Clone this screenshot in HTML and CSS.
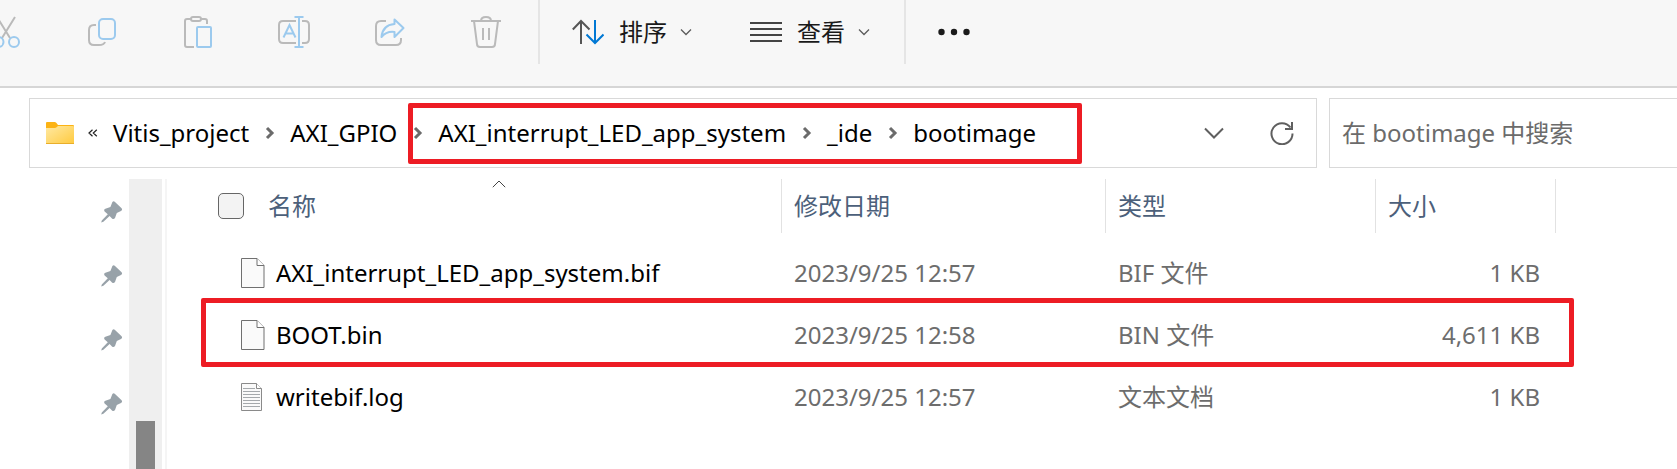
FILE: index.html
```html
<!DOCTYPE html>
<html lang="zh-CN">
<head>
<meta charset="utf-8">
<title>bootimage</title>
<link rel="stylesheet" href="styles.css">
</head>
<body>
<svg class="symbols" aria-hidden="true">
  <symbol id="pin" viewBox="0 0 22 22"><path d="M11.400 1Q12.600-.4 14 1L20.600 7.200Q21.800 9 20 10L15.800 12L14 17Q12.600 18.800 11 17.400L8.600 15L2.400 20.800L.2 21.400L.8 19.400L6.800 13.200L3.600 10.400Q2.400 8.600 4.400 7.800L9.400 6Z" fill="#98a2a9"/></symbol>
  <symbol id="sep" viewBox="0 0 10 14"><path d="M2 2l5 5-5 5" fill="none" stroke="#6b6b6b" stroke-width="3"/></symbol>
  <symbol id="down" viewBox="0 0 12 8"><path d="M1 1.5l5 5 5-5" fill="none" stroke="#5c5c5c" stroke-width="1.3"/></symbol>
  <symbol id="file" viewBox="0 0 24 30"><path d="M.5.5h15.500l7 7v22H.5z" fill="#fafafa" stroke="#707070"/><path d="M16 .5v7h7" fill="#fff" stroke="#707070"/></symbol>
</svg>

<header class="toolbar">
  <div class="tools">
    <button class="tool" aria-label="剪切"><svg width="32" height="36" viewBox="0 0 32 36" fill="none" stroke-width="2"><path d="M7 3l13 21M25 3L12 24" stroke="#bababa"/><circle cx="8.500" cy="28" r="5" stroke="#9ccaee"/><circle cx="24" cy="28" r="5" stroke="#9ccaee"/></svg></button>
    <button class="tool" aria-label="复制"><svg width="32" height="32" viewBox="0 0 32 32" fill="none" stroke-width="2"><path d="M10 9H8q-5 0-5 5v10q0 5 5 5h5q5 0 6-3" stroke="#bababa"/><rect x="13" y="3" width="16" height="20" rx="4" stroke="#9ccaee"/></svg></button>
    <button class="tool" aria-label="粘贴"><svg width="32" height="32" viewBox="0 0 32 32" fill="none" stroke-width="2"><path d="M9 3H5q-2 0-2 2v24q0 2 2 2h7M19 3h4q2 0 2 2v3" stroke="#bababa"/><rect x="9" y="1" width="10" height="4" rx="2" stroke="#bababa"/><rect x="15" y="11" width="14" height="20" rx="1" stroke="#9ccaee"/></svg></button>
    <button class="tool" aria-label="重命名"><svg width="32" height="32" viewBox="0 0 32 32" fill="none" stroke-width="2"><path d="M18 5H5Q1 5 1 9v14q0 4 4 4h13M24 5h3q4 0 4 4v14q0 4-4 4h-3" stroke="#bababa"/><path d="M16.500 1h9M21 1v30M16.500 31h9M5.500 21.500L11.500 9l6 12.500M8 17.500h7.500" stroke="#9ccaee"/></svg></button>
    <button class="tool" aria-label="共享"><svg width="32" height="32" viewBox="0 0 32 32" fill="none" stroke-width="2"><path d="M12 5H7Q2 5 2 10v14q0 5 5 5h15q5 0 5-5v-2" stroke="#bababa"/><path d="M20.500 3.500l9 8.500-9 9v-5q-8-1-13 5 1-12 13-13z" stroke="#9ccaee" stroke-linejoin="round"/></svg></button>
    <button class="tool" aria-label="删除"><svg width="32" height="32" viewBox="0 0 32 32" fill="none" stroke="#bababa" stroke-width="2"><path d="M1 5h30M11 5q0-4 5-4t5 4M4 5l3 23q0 3 3 3h12q3 0 3-3l3-23M13 12v12M19 12v12"/></svg></button>
  </div>
  <div class="menus">
    <button class="menu"><svg width="32" height="26" viewBox="0 0 32 26" fill="none" stroke-width="2"><path d="M9 25V2M.8 10.500L9 2l8.500 8.500" stroke="#555"/><path d="M23 1v23M14.500 15.500L23 24l8.500-8.500" stroke="#0078d4"/></svg><span>排序</span><svg width="12" height="8"><use href="#down"/></svg></button>
    <button class="menu"><svg width="32" height="26" viewBox="0 0 32 26" fill="none" stroke="#444" stroke-width="2"><path d="M0 4h32M0 10h32M0 16h32M0 22h32"/></svg><span>查看</span><svg width="12" height="8"><use href="#down"/></svg></button>
  </div>
  <button class="more" aria-label="更多"><svg width="32" height="8" fill="#1a1a1a"><circle cx="3.500" cy="4" r="3.200"/><circle cx="16" cy="4" r="3.200"/><circle cx="28.500" cy="4" r="3.200"/></svg></button>
</header>

<div class="location">
  <nav class="address" aria-label="地址">
    <svg class="folder" width="28" height="22" viewBox="0 0 28 22"><defs><linearGradient id="fold" x1="0" y1="0" x2="1" y2="1"><stop offset="0" stop-color="#ffe9a3"/><stop offset="1" stop-color="#ffca3e"/></linearGradient></defs><path d="M0 1q0-1 1-1h8q1 0 3 3h15q1 0 1 1v6H0z" fill="#fcb314"/><path d="M0 6h9q1 0 3-2h15q1 0 1 1v16q0 1-1 1H1q-1 0-1-1z" fill="url(#fold)"/><path d="M0 21.500h28" stroke="#e9ae2a"/></svg>
    <svg class="earlier" width="10" height="8" viewBox="0 0 10 8" fill="none" stroke="#222" stroke-width="1.200"><path d="M4.500.8L1 4l3.500 3.200M8.800.8L5.300 4l3.500 3.200"/></svg>
    <a class="crumb" href="#">Vitis_project</a>
    <svg width="10" height="14"><use href="#sep"/></svg>
    <a class="crumb" href="#">AXI_GPIO</a>
    <div class="marked-path">
      <svg width="10" height="14"><use href="#sep"/></svg>
      <a class="crumb" href="#">AXI_interrupt_LED_app_system</a>
      <svg width="10" height="14"><use href="#sep"/></svg>
      <a class="crumb" href="#">_ide</a>
      <svg width="10" height="14"><use href="#sep"/></svg>
      <a class="crumb" href="#">bootimage</a>
    </div>
    <div class="address-actions">
      <button aria-label="历史记录"><svg width="20" height="12" viewBox="0 0 20 12" fill="none" stroke="#5f5f5f" stroke-width="2"><path d="M1 1.500l9 9 9-9"/></svg></button>
      <button aria-label="刷新"><svg width="24" height="24" viewBox="0 0 24 24" fill="none" stroke="#5f5f5f" stroke-width="2"><path d="M22.500 12.500A10.500 10.500 0 1 1 20.500 6.500M22 1v7h-7"/></svg></button>
    </div>
  </nav>
  <input class="search" type="search" aria-label="搜索" placeholder="在 bootimage 中搜索">
</div>

<div class="content">
  <aside class="pins">
    <svg width="22" height="22"><use href="#pin"/></svg>
    <svg width="22" height="22"><use href="#pin"/></svg>
    <svg width="22" height="22"><use href="#pin"/></svg>
    <svg width="22" height="22"><use href="#pin"/></svg>
  </aside>
  <div class="scrollbar"><div class="thumb"></div></div>
  <main class="files">
    <table>
      <colgroup><col class="col-name"><col class="col-date"><col class="col-type"><col class="col-size"></colgroup>
      <thead>
        <tr>
          <th><div class="name-head"><input type="checkbox" aria-label="全选"><span>名称</span></div><svg class="sorted" width="14" height="8" viewBox="0 0 14 8" fill="none" stroke="#444"><path d="M.8 7.200L7 1l6.200 6.200"/></svg></th>
          <th>修改日期</th><th>类型</th><th>大小</th>
        </tr>
      </thead>
      <tbody>
        <tr><td><div class="file"><svg width="24" height="30"><use href="#file"/></svg>AXI_interrupt_LED_app_system.bif</div></td><td>2023/9/25 12:57</td><td>BIF 文件</td><td>1 KB</td></tr>
        <tr class="marked-row"><td><div class="file"><svg width="24" height="30"><use href="#file"/></svg>BOOT.bin</div></td><td>2023/9/25 12:58</td><td>BIN 文件</td><td>4,611 KB</td></tr>
        <tr><td><div class="file"><svg width="24" height="28" viewBox="0 0 24 28"><path d="M.5.500h15l5 5v22H.5z" fill="#fafafa" stroke="#8a8a8a"/><path d="M15.500.500v5h5" fill="#fff" stroke="#8a8a8a"/><path d="M2 5.500h12M2 8.500h17M2 11.500h17M2 14.500h17M2 17.500h17M2 20.500h17M2 23.500h17" stroke="#a5a9ac"/></svg>writebif.log</div></td><td>2023/9/25 12:57</td><td>文本文档</td><td>1 KB</td></tr>
      </tbody>
    </table>
  </main>
</div>
</body>
</html>
```

FILE: styles.css
```css
* { box-sizing: border-box; }
body {
  margin: 0;
  height: 100vh;
  overflow: hidden;
  display: flex;
  flex-direction: column;
  background: #fff;
  color: #000;
  font: 24px/32px "Noto Sans", "Noto Sans CJK SC", sans-serif;
}
svg { display: block; flex: none; }
.symbols { position: absolute; width: 0; height: 0; }
button {
  border: 0;
  padding: 0;
  background: none;
  color: inherit;
  font: inherit;
}

.toolbar {
  display: flex;
  align-items: flex-start;
  flex: none;
  padding-bottom: 22px;
  background: #f7f7f7;
  border-bottom: 2px solid #d6d6d6;
}
.toolbar > * { height: 64px; }
.tools {
  display: flex;
  margin-left: -42px;
  padding-right: 4px;
}
.tool {
  display: flex;
  align-items: center;
  justify-content: center;
  width: 96px;
}
.menus {
  display: flex;
  gap: 58px;
  padding: 0 34px 0 32px;
  border: solid #e5e5e5;
  border-width: 0 2px;
  color: #1a1a1a;
}
.menu {
  display: flex;
  align-items: center;
}
.menu span { margin: 0 13px 0 15px; }
.more { margin-left: 32px; }

.location {
  display: flex;
  flex: none;
  gap: 12px;
  padding: 10px 0 11px 29px;
}
.address {
  display: flex;
  align-items: center;
  flex: 1;
  height: 70px;
  padding-left: 16px;
  border: 1px solid #d9d9d9;
}
.crumb {
  margin: 0 16px 0 15px;
  color: #000;
  text-decoration: none;
}
.earlier { margin-left: 14px; }
.marked-path {
  position: relative;
  display: flex;
  align-items: center;
  align-self: stretch;
}
.marked-path::after,
.marked-row::after {
  content: "";
  position: absolute;
  border: 5px solid #ed1c24;
  border-radius: 2px;
  pointer-events: none;
}
.marked-path::after { inset: 4px -30px 3px -5px; }
.address-actions {
  display: flex;
  gap: 46px;
  margin-left: auto;
  padding-right: 22px;
}
.address-actions button {
  display: flex;
  align-items: center;
}
.search {
  flex: 0 1 348px;
  min-width: 0;
  padding: 0 12px;
  border: 1px solid #d9d9d9;
  border-right: 0;
  border-radius: 0;
  appearance: none;
  background: #fff;
  font: inherit;
}
.search::placeholder { color: #6b6b6b; opacity: 1; }

.content {
  display: flex;
  flex: 1;
  min-height: 0;
}
.pins {
  display: flex;
  flex-direction: column;
  gap: 42px;
  width: 129px;
  padding: 22px 0 0 101px;
}
.scrollbar {
  display: flex;
  align-items: flex-end;
  justify-content: center;
  width: 33px;
  margin-right: 3px;
  background: #efefef;
}
.thumb {
  width: 19px;
  height: 48px;
  background: #858585;
}
.files {
  flex: 1;
  border-left: 2px solid #f5f5f5;
}
table {
  border-collapse: separate;
  border-spacing: 0;
  table-layout: fixed;
  width: 1389px;
}
.col-name { width: 615px; }
.col-date { width: 324px; }
.col-type { width: 270px; }
.col-size { width: 180px; }
th, td {
  padding: 0 12px;
  text-align: left;
  font-weight: 400;
  white-space: nowrap;
}
th {
  position: relative;
  height: 54px;
  border-right: 1px solid #e2e2e2;
  color: #4c607a;
}
.name-head {
  display: flex;
  align-items: center;
  gap: 24px;
  padding-left: 39px;
}
.name-head input {
  appearance: none;
  width: 26px;
  height: 26px;
  margin: 0;
  border: 1px solid #666;
  border-radius: 5px;
  background: #f3f3f3;
}
.sorted {
  position: absolute;
  top: 1px;
  left: 325px;
}
tbody::before {
  content: "";
  display: block;
  height: 9px;
}
td {
  height: 62px;
  color: #6d6d6d;
}
td:first-child { padding-left: 74px; color: #000; }
td:last-child { padding-right: 16px; text-align: right; }
.file {
  display: flex;
  align-items: center;
  gap: 11px;
}
.marked-row { position: relative; }
.marked-row::after { inset: -6px -18px -1px 34px; }
```
